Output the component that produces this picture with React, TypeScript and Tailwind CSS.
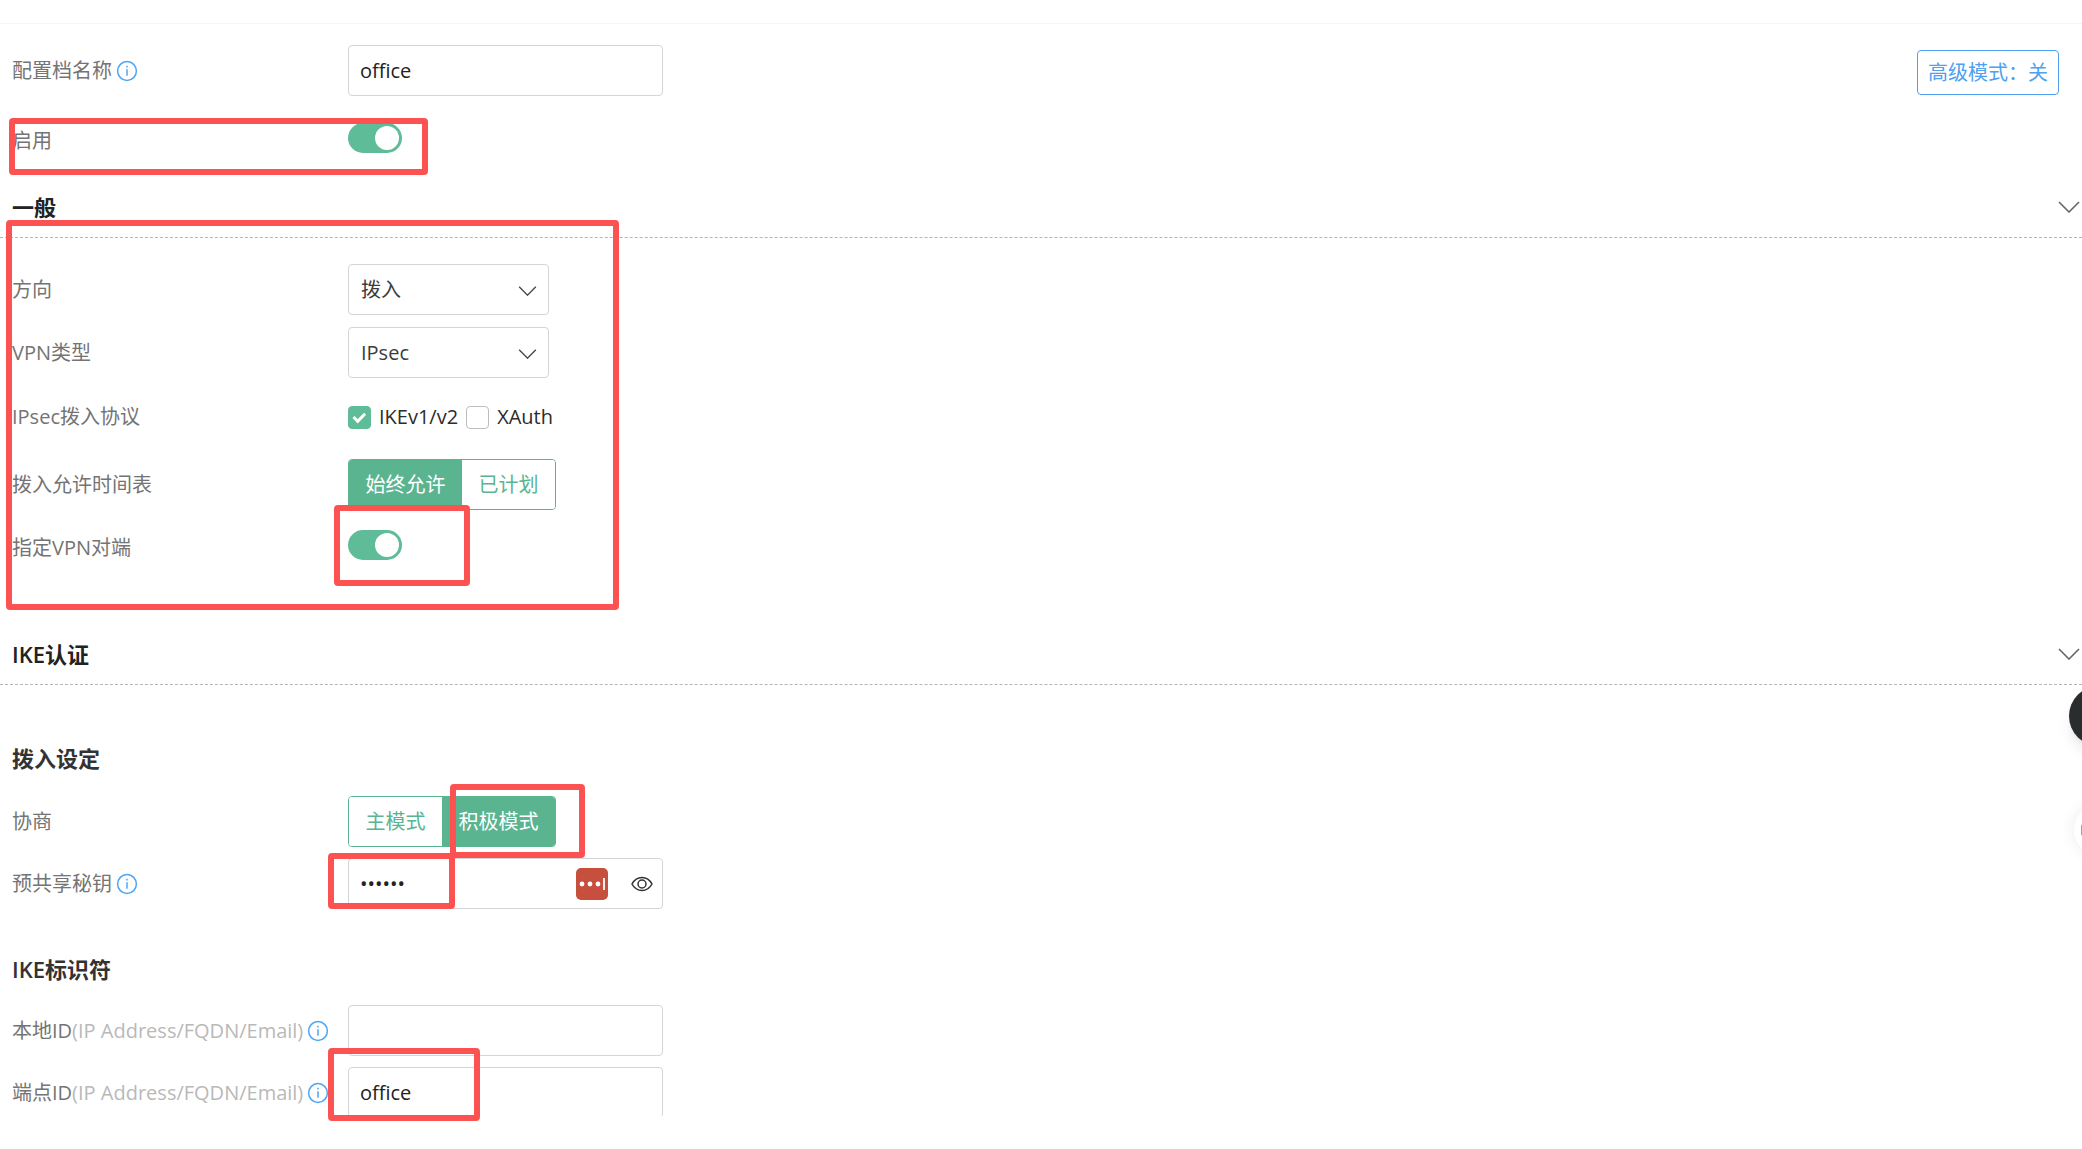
import { useState, type ReactNode } from "react";

function InfoIcon() {
  return (
    <button type="button" aria-label="说明" className="ml-1 shrink-0 text-[#4fa5f5]">
      <svg width="22" height="22" viewBox="0 0 22 22" fill="none" stroke="currentColor" strokeWidth="1.5">
        <circle cx="11" cy="11" r="9.400" />
        <path d="M11 9.300v6.500" />
        <path d="M11 5.800v1.800" />
      </svg>
    </button>
  );
}

function Chevron({ className }: { className: string }) {
  return (
    <svg className={className} viewBox="0 0 22 12" fill="none" stroke="currentColor" strokeWidth="1.6">
      <path d="M1 1l10 10L21 1" />
    </svg>
  );
}

type RowProps = { label: string; hint?: string; info?: boolean; htmlFor?: string; tall?: boolean; children: ReactNode };

function Row({ label, hint, info, htmlFor, tall, children }: RowProps) {
  return (
    <div className={tall ? "flex min-h-[57px] items-center pb-[3px]" : "flex min-h-[51px] items-center"}>
      <div className="flex w-[336px] shrink-0 items-center text-[#747474]">
        <label htmlFor={htmlFor}>
          {label}
          {hint && <span className="text-[#b9b9b9]">{hint}</span>}
        </label>
        {info && <InfoIcon />}
      </div>
      {children}
    </div>
  );
}

const inputClass = "h-[51px] w-[315px] rounded-[4px] border border-[#d5d5d5] bg-white px-[11px] text-[#222] outline-none";

function TextInput({ id, value }: { id: string; value: string }) {
  return <input id={id} type="text" defaultValue={value} className={inputClass} />;
}

function Toggle({ id }: { id: string }) {
  const [on, setOn] = useState(true);
  return (
    <input
      id={id}
      type="checkbox"
      role="switch"
      checked={on}
      onChange={() => setOn(!on)}
      className="mb-[5px] h-[30px] w-[54px] cursor-pointer appearance-none rounded-full bg-gray-300 p-[3px] before:block before:size-6 before:rounded-full before:bg-white checked:bg-[#5fbc98] checked:before:ml-6"
    />
  );
}

function Select({ id, options }: { id: string; options: string[] }) {
  return (
    <div className="relative w-[201px]">
      <select id={id} className="h-[51px] w-full appearance-none rounded-[4px] border border-[#d5d5d5] bg-white px-3 text-[#3c3c3c] outline-none">
        {options.map((o) => (
          <option key={o}>{o}</option>
        ))}
      </select>
      <Chevron className="pointer-events-none absolute top-[22px] right-3 h-[10px] w-[19px] text-[#444]" />
    </div>
  );
}

function Check({ id, label, initial }: { id: string; label: string; initial: boolean }) {
  const [on, setOn] = useState(initial);
  return (
    <label htmlFor={id} className="flex items-center gap-2 text-[#2c2c2c]">
      <span className="relative size-[23px]">
        <input
          id={id}
          type="checkbox"
          checked={on}
          onChange={() => setOn(!on)}
          className="block size-[23px] appearance-none rounded-[4px] border border-[#bdbdbd] bg-white checked:border-[#5fbc98] checked:bg-[#5fbc98]"
        />
        {on && (
          <svg className="pointer-events-none absolute inset-0" width="23" height="23" viewBox="0 0 23 23" fill="none" stroke="#fff" strokeWidth="3">
            <path d="M5.500 11l4.200 4.300 7.400-7.500" />
          </svg>
        )}
      </span>
      {label}
    </label>
  );
}

function Segmented({ options, initial }: { options: string[]; initial: number }) {
  const [active, setActive] = useState(initial);
  return (
    <div className="flex h-[51px] w-[208px] overflow-hidden rounded-[4px] border border-[#5ab48f]">
      {options.map((o, i) => (
        <button
          key={o}
          type="button"
          aria-pressed={active === i}
          onClick={() => setActive(i)}
          className={active === i ? "flex-auto bg-[#5ab48f] text-white" : "flex-auto bg-white text-[#5ab48f]"}
        >
          {o}
        </button>
      ))}
    </div>
  );
}

function SectionHeader({ title }: { title: string }) {
  return (
    <h2 className="flex h-[60px] items-center justify-between border-b border-dashed border-[#b5b5b5] pr-[2px] pb-0.5 pl-3 text-[22px] font-semibold text-[#222]">
      {title}
      <button type="button" aria-label={title}>
        <Chevron className="h-3 w-[22px] text-[#666]" />
      </button>
    </h2>
  );
}

function Highlight({ className }: { className: string }) {
  return <div aria-hidden="true" className={`pointer-events-none absolute rounded-[4px] border-6 border-[#fd5252] ${className}`} />;
}

export default function App() {
  return (
    <main className="relative overflow-hidden bg-white pb-[33px] font-['Open_Sans','Noto_Sans_CJK_SC',sans-serif] text-[20px] leading-7">
      <div className="h-6 border-b border-[#f5f5f5]" />

      <div className="flex items-start justify-between pt-[21px] pr-[23px] pl-3">
        <div className="flex flex-col gap-[19px]">
          <Row label="配置档名称" info htmlFor="name">
            <TextInput id="name" value="office" />
          </Row>
          <Row label="启用" htmlFor="enabled">
            <Toggle id="enabled" />
          </Row>
        </div>
        <button type="button" className="mt-[5px] h-[45px] rounded-[4px] border border-[#4fa0ef] px-[10px] text-[#4fa0ef]">
          高级模式：关
        </button>
      </div>

      <section className="mt-3">
        <SectionHeader title="一般" />
        <div className="flex flex-col gap-3 pt-[26px] pb-[52px] pl-3">
          <Row label="方向" htmlFor="direction">
            <Select id="direction" options={["拨入", "拨出"]} />
          </Row>
          <Row label="VPN类型" htmlFor="type">
            <Select id="type" options={["IPsec", "OpenVPN"]} />
          </Row>
          <Row label="IPsec拨入协议" tall>
            <div className="flex gap-2">
              <Check id="ike" label="IKEv1/v2" initial />
              <Check id="xauth" label="XAuth" initial={false} />
            </div>
          </Row>
          <Row label="拨入允许时间表">
            <Segmented options={["始终允许", "已计划"]} initial={0} />
          </Row>
          <Row label="指定VPN对端" htmlFor="peer">
            <Toggle id="peer" />
          </Row>
        </div>
      </section>

      <section>
        <SectionHeader title="IKE认证" />
        <div className="pt-[57px] pl-3">
          <h3 className="text-[22px] leading-8 font-semibold text-[#333]">拨入设定</h3>
          <div className="flex flex-col gap-[11px] pt-[22px]">
            <Row label="协商">
              <Segmented options={["主模式", "积极模式"]} initial={1} />
            </Row>
            <Row label="预共享秘钥" info htmlFor="psk">
              <div className="relative">
                <input id="psk" type="password" defaultValue="secret" className={inputClass} />
                <div className="absolute inset-y-0 right-[10px] flex items-center gap-[23px]">
                  <button type="button" aria-label="密码管理器">
                    <svg width="32" height="32" viewBox="0 0 32 32">
                      <rect width="32" height="32" rx="5" fill="#c64f3d" />
                      <circle cx="6" cy="16" r="2.4" fill="#fff" />
                      <circle cx="14" cy="16" r="2.4" fill="#fff" />
                      <circle cx="22" cy="16" r="2.4" fill="#fff" />
                      <path d="M28 10v12" stroke="#fff" strokeWidth="1.8" />
                    </svg>
                  </button>
                  <button type="button" aria-label="显示密码">
                    <svg width="22" height="16" viewBox="0 0 22 16" fill="none" stroke="#333" strokeWidth="1.5">
                      <path d="M1 8c2.300-4.300 5.800-6.500 10-6.500S18.700 3.700 21 8c-2.300 4.300-5.800 6.500-10 6.500S3.300 12.300 1 8z" />
                      <circle cx="11" cy="8" r="4" />
                    </svg>
                  </button>
                </div>
              </div>
            </Row>
          </div>

          <h3 className="mt-11 text-[22px] leading-8 font-semibold text-[#333]">IKE标识符</h3>
          <div className="flex h-[131px] flex-col gap-[11px] overflow-hidden pt-5">
            <Row label="本地ID" hint="(IP Address/FQDN/Email)" info htmlFor="local">
              <TextInput id="local" value="" />
            </Row>
            <Row label="端点ID" hint="(IP Address/FQDN/Email)" info htmlFor="remote">
              <TextInput id="remote" value="office" />
            </Row>
          </div>
        </div>
      </section>

      <Highlight className="top-[118px] left-[9px] h-[57px] w-[419px]" />
      <Highlight className="top-[220px] left-[6px] h-[390px] w-[613px]" />
      <Highlight className="top-[505px] left-[334px] h-[81px] w-[136px]" />
      <Highlight className="top-[784px] left-[450px] h-[74px] w-[135px]" />
      <Highlight className="top-[853px] left-[328px] h-[56px] w-[127px]" />
      <Highlight className="top-[1048px] left-[328px] h-[73px] w-[152px]" />

      <button type="button" aria-label="助手" className="absolute top-[686px] -right-[47px] size-[60px] rounded-full bg-[#2a2d2d] shadow-lg" />
      <button type="button" aria-label="快捷工具" className="absolute top-[804px] -right-[44px] size-[52px] rounded-full bg-white shadow-[0_0_16px_rgba(0,0,0,0.08)]">
        <span className="ml-[7px] block h-3 w-9 rounded-xs bg-[#d58a9f]" />
      </button>
    </main>
  );
}
